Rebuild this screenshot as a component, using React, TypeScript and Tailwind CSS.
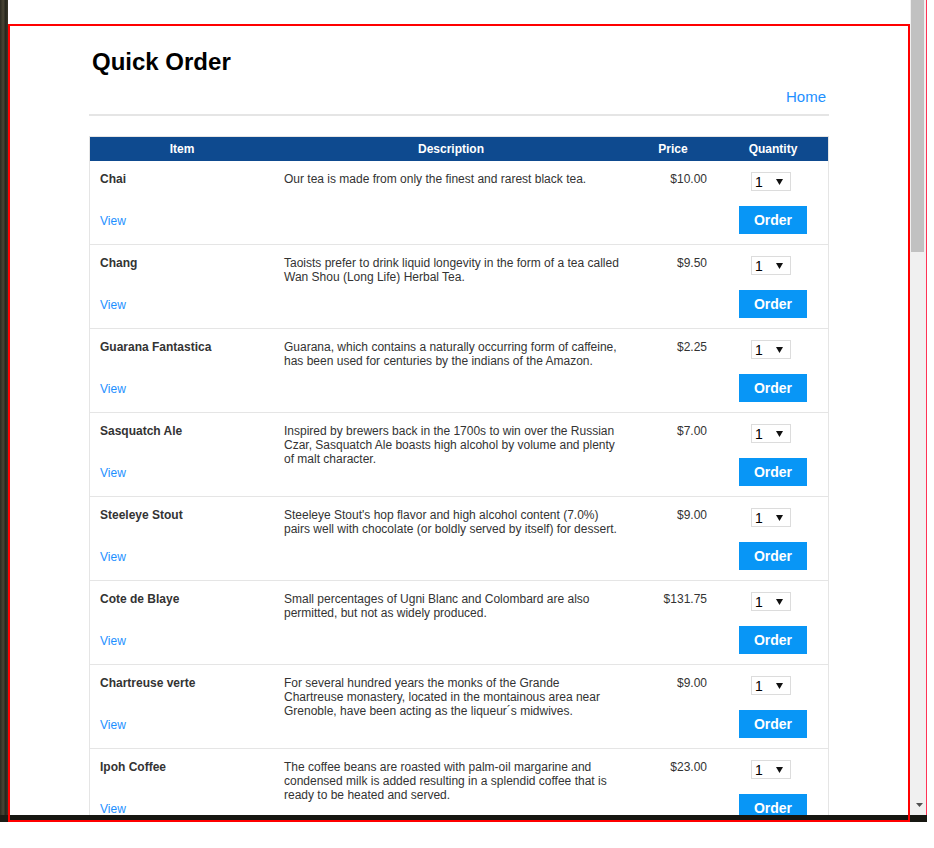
const products = [
  {
    name: "Chai",
    lines: ["Our tea is made from only the finest and rarest black tea."],
    price: "$10.00",
  },
  {
    name: "Chang",
    lines: [
      "Taoists prefer to drink liquid longevity in the form of a tea called",
      "Wan Shou (Long Life) Herbal Tea.",
    ],
    price: "$9.50",
  },
  {
    name: "Guarana Fantastica",
    lines: [
      "Guarana, which contains a naturally occurring form of caffeine,",
      "has been used for centuries by the indians of the Amazon.",
    ],
    price: "$2.25",
  },
  {
    name: "Sasquatch Ale",
    lines: [
      "Inspired by brewers back in the 1700s to win over the Russian",
      "Czar, Sasquatch Ale boasts high alcohol by volume and plenty",
      "of malt character.",
    ],
    price: "$7.00",
  },
  {
    name: "Steeleye Stout",
    lines: [
      "Steeleye Stout's hop flavor and high alcohol content (7.0%)",
      "pairs well with chocolate (or boldly served by itself) for dessert.",
    ],
    price: "$9.00",
  },
  {
    name: "Cote de Blaye",
    lines: [
      "Small percentages of Ugni Blanc and Colombard are also",
      "permitted, but not as widely produced.",
    ],
    price: "$131.75",
  },
  {
    name: "Chartreuse verte",
    lines: [
      "For several hundred years the monks of the Grande",
      "Chartreuse monastery, located in the montainous area near",
      "Grenoble, have been acting as the liqueur´s midwives.",
    ],
    price: "$9.00",
  },
  {
    name: "Ipoh Coffee",
    lines: [
      "The coffee beans are roasted with palm-oil margarine and",
      "condensed milk is added resulting in a splendid coffee that is",
      "ready to be heated and served.",
    ],
    price: "$23.00",
  },
];

function QtySelect() {
  return (
    <div className="ml-[33px] flex h-[19px] w-[40px] items-center justify-between border border-[#dcdcdc] bg-white pl-[3px] pr-[7px]">
      <span className="text-[14px] leading-none text-black">1</span>
      <svg width="7" height="6" viewBox="0 0 7 6">
        <polygon points="0,0 7,0 3.5,6" fill="#111" />
      </svg>
    </div>
  );
}

function ProductRow({ p }: { p: (typeof products)[number] }) {
  return (
    <div className="grid h-[84px] grid-cols-[184px_354px_90px_110px] border-b border-[#e5e5e5] pt-[11px] text-[12px] leading-[14px] text-[#333]">
      {/* item */}
      <div className="flex flex-col pl-[10px]">
        <span className="font-bold">{p.name}</span>
        <a className="mt-[28px] w-fit text-[#1e90ff]">View</a>
      </div>
      {/* description */}
      <div className="pl-[10px]">
        {p.lines.map((l) => (
          <div key={l} className="whitespace-nowrap">
            {l}
          </div>
        ))}
      </div>
      {/* price */}
      <div className="pr-[11px] text-right">{p.price}</div>
      {/* quantity */}
      <div className="flex flex-col">
        <QtySelect />
        <button className="ml-[21px] mt-[15px] h-[28px] w-[68px] bg-[#0896f6] text-[14px] font-bold text-white">
          Order
        </button>
      </div>
    </div>
  );
}

function Scrollbar() {
  return (
    <div className="flex h-full w-[16px] flex-col bg-[#f0f0f0]">
      <div className="ml-[1px] h-[252px] w-[13px] bg-[#c1c1c1]" />
      <div className="flex-1" />
      <div className="mb-[8px] flex justify-center pl-[2px]">
        <svg width="7" height="4" viewBox="0 0 7 4">
          <polygon points="0,0 7,0 3.5,4" fill="#505050" />
        </svg>
      </div>
    </div>
  );
}

export default function App() {
  return (
    <div className="h-[848px] w-[934px] overflow-hidden bg-white font-['Liberation_Sans',Arial,sans-serif]">
      <div className="flex h-[815px]">
        <div className="w-[8px] bg-[linear-gradient(90deg,#2b2a20,#4a4535_40%,#26261d_70%,#3a382a)]" />
        <div className="flex w-[902px] flex-col">
          <div className="h-[24px] bg-white" />
          <div className="flex-1 overflow-hidden border-x-2 border-t-2 border-[#ff0000] bg-white">
            <div className="mx-auto w-[740px] pt-[22px]">
              <h1 className="pl-[3px] text-[24px] font-bold leading-[28px] text-black">
                Quick Order
              </h1>
              <div className="mt-[12px] pr-[3px] text-right text-[15px] leading-[18px]">
                <a className="text-[#1e90ff]">Home</a>
              </div>
              <div className="mt-[8px] h-[2px] bg-[#e5e5e5]" />

              {/* Order table */}
              <div className="mt-[20px] border border-[#e5e5e5]">
                <div className="grid h-[24px] grid-cols-[184px_354px_90px_110px] items-center bg-[#0e4a8f] text-center text-[12px] font-bold text-white">
                  <div>Item</div>
                  <div>Description</div>
                  <div>Price</div>
                  <div>Quantity</div>
                </div>
                {products.map((p) => (
                  <ProductRow key={p.name} p={p} />
                ))}
              </div>
            </div>
          </div>
        </div>
        <Scrollbar />
        <div className="w-[1px] bg-[#ff3355]" />
      </div>
      <div className="flex h-[7px]">
        <div className="w-[8px] bg-[#1c1c15]" />
        <div className="w-[902px] border-x-2 border-b-2 border-[#ff0000] bg-[#161611]" />
        <div className="w-[17px] bg-[#161611]" />
      </div>
    </div>
  );
}
